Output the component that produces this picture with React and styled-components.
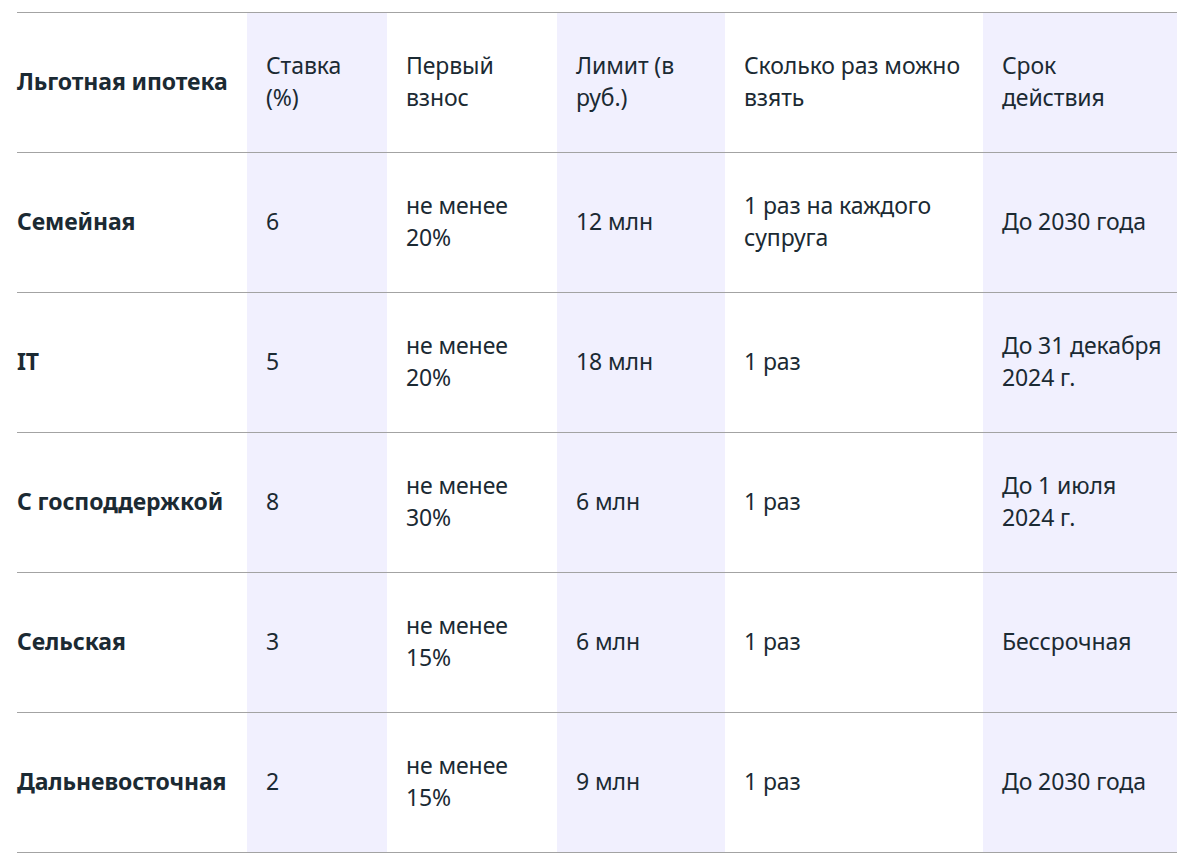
import React from 'react'
import styled, { createGlobalStyle } from 'styled-components';

const GlobalStyle = createGlobalStyle`
  body {
    margin: 0;
    background: #fff;
    font-family: "Noto Sans", "Open Sans", sans-serif;
    color: #1b2a33;
  }
`;

const columns = [
    { width: 230, shaded: false },
    { width: 140, shaded: true },
    { width: 170, shaded: false },
    { width: 168, shaded: true },
    { width: 258, shaded: false },
    { width: 194, shaded: true },
];

const header = ['Льготная ипотека', 'Ставка (%)', 'Первый взнос', 'Лимит (в руб.)', 'Сколько раз можно взять', 'Срок действия'];

const rows = [
    ['Семейная', '6', 'не менее 20%', '12 млн', '1 раз на каждого супруга', 'До 2030 года'],
    ['IT', '5', 'не менее 20%', '18 млн', '1 раз', 'До 31 декабря 2024 г.'],
    ['С господдержкой', '8', 'не менее 30%', '6 млн', '1 раз', 'До 1 июля 2024 г.'],
    ['Сельская', '3', 'не менее 15%', '6 млн', '1 раз', 'Бессрочная'],
    ['Дальневосточная', '2', 'не менее 15%', '9 млн', '1 раз', 'До 2030 года'],
];

const Page = styled.div`
    padding: 12px 10px 16px 17px;
`;

const Table = styled.table`
    width: 1160px;
    border-collapse: collapse;
    table-layout: fixed;
`;

const Col = styled.col`
    width: ${p => p.$w}px;
    background: ${p => p.$shaded ? '#f1f0fe' : 'transparent'};
`;

const Row = styled.tr`
    height: 140px;
    border-top: 1px solid #a3a3a3;
    border-bottom: 1px solid #a3a3a3;
`;

const Cell = styled.td`
    padding: 0 14px 3px ${p => p.$first ? 0 : 19}px;
    vertical-align: middle;
    font-size: 23px;
    line-height: 32px;
    font-weight: ${p => p.$first ? 700 : 400};
    letter-spacing: -0.1px;
    text-align: left;
`;

const App = () => {
    return (
        <Page>
            <GlobalStyle />
            <Table>
                <colgroup>
                    {columns.map((c, i) => <Col key={i} $w={c.width} $shaded={c.shaded} />)}
                </colgroup>
                <thead>
                    <Row>
                        {header.map((h, i) => <Cell as="th" key={i} $first={i === 0}>{h}</Cell>)}
                    </Row>
                </thead>
                <tbody>
                    {rows.map((r, ri) => (
                        <Row key={ri}>
                            {r.map((v, i) => <Cell key={i} $first={i === 0}>{v}</Cell>)}
                        </Row>
                    ))}
                </tbody>
            </Table>
        </Page>
    )
}

export default App;
